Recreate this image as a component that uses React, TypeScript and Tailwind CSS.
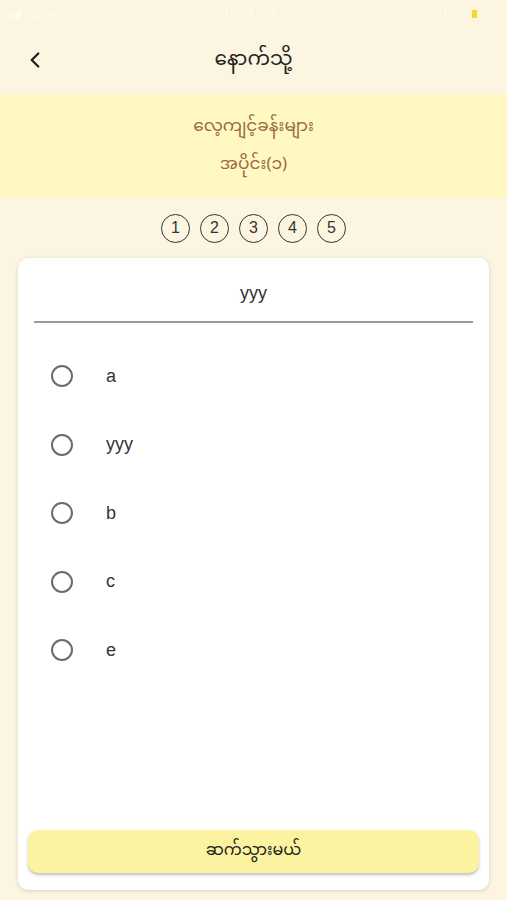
import { ChevronLeft } from 'lucide-react';

const myanmar = {
  fontFamily: '"Noto Sans Myanmar", "Padauk", "Myanmar Text", "Noto Sans", sans-serif',
};

const options = ['a', 'yyy', 'b', 'c', 'e'];

export default function App() {
  return (
    <div
      className="w-[507px] h-[900px] bg-[#fcf5e1] flex flex-col overflow-hidden"
      style={{ fontFamily: '"Liberation Sans", Arial, sans-serif' }}
    >
      {/* status bar (faded) */}
      <div className="h-[28px] flex items-center justify-between px-[10px] text-[12px] text-white/60">
        <div className="flex items-center gap-1">
          <div className="flex items-end gap-[1px]">
            <span className="w-[2px] h-[4px] bg-white/60" />
            <span className="w-[2px] h-[6px] bg-white/60" />
            <span className="w-[2px] h-[8px] bg-white/60" />
            <span className="w-[2px] h-[10px] bg-white/60" />
          </div>
          <span>Carrier</span>
        </div>
        <span>10:24 PM</span>
        <div className="flex items-center gap-1 pr-[20px]">
          <span>100%</span>
          <span className="w-[5px] h-[8px] bg-[#f7d52a]" />
        </div>
      </div>

      {/* nav bar */}
      <div className="h-[66px] flex items-center relative">
        <ChevronLeft className="absolute left-[22px] top-[19px] text-[#222]" size={26} strokeWidth={2.2} />
        <div className="flex-1 text-center text-[20px] leading-[28px] text-[#222]" style={myanmar}>
          နောက်သို့
        </div>
      </div>

      {/* title band */}
      <div
        className="h-[104px] bg-[#fff8c2] flex flex-col items-center justify-center gap-[14px] text-[#9b6a3f] text-[17px] leading-[24px]"
        style={myanmar}
      >
        <div>လေ့ကျင့်ခန်းများ</div>
        <div>အပိုင်း(၁)</div>
      </div>

      {/* question numbers */}
      <div className="h-[60px] flex items-center justify-center gap-[10px]">
        {[1, 2, 3, 4, 5].map((n) => (
          <div
            key={n}
            className="w-[29px] h-[29px] rounded-full border-[1.5px] border-[#333] flex items-center justify-center text-[16px] text-[#333]"
          >
            {n}
          </div>
        ))}
      </div>

      {/* card */}
      <div className="mx-[18px] h-[632px] bg-white rounded-[10px] shadow-[0_1px_4px_rgba(0,0,0,0.15)] flex flex-col px-[10px] pb-[17px]">
        <div className="h-[65px] pt-[8px] mx-[6px] flex items-center justify-center text-[18px] text-[#333] border-b-2 border-[#9a9a9a]">
          yyy
        </div>

        <div className="flex flex-col pt-[19px]">
          {options.map((o) => (
            <div key={o} className="h-[68.5px] flex items-center">
              <span className="ml-[23px] w-[22px] h-[22px] rounded-full border-2 border-[#6b6b6b]" />
              <span className="ml-[33px] text-[18px] text-[#333]">{o}</span>
            </div>
          ))}
        </div>

        <div className="flex-1" />

        <button
          className="h-[43px] bg-[#fcf3a0] rounded-[10px] shadow-[0_2px_3px_rgba(0,0,0,0.25)] text-[16px] text-[#222]"
          style={myanmar}
        >
          ဆက်သွားမယ်
        </button>
      </div>
    </div>
  );
}
